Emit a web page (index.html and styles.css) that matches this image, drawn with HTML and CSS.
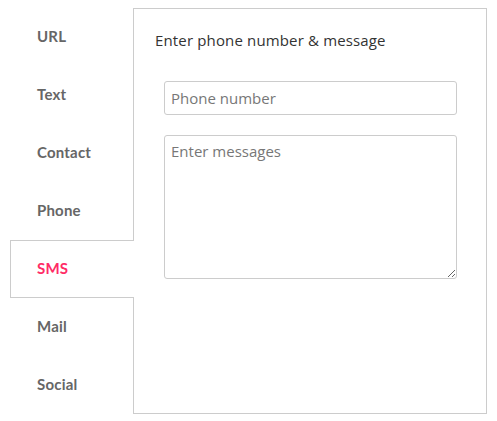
FILE: index.html
```html
<!DOCTYPE html>
<html>
<head>
<meta charset="utf-8">
<link rel="stylesheet" href="styles.css">
</head>
<body>
<div class="wrap">
  <ul class="tabs">
    <li class="tab">URL</li>
    <li class="tab">Text</li>
    <li class="tab">Contact</li>
    <li class="tab">Phone</li>
    <li class="tab active">SMS</li>
    <li class="tab">Mail</li>
    <li class="tab">Social</li>
  </ul>
  <div class="panel">
    <h2 class="title">Enter phone number &amp; message</h2>
    <input class="field" type="text" placeholder="Phone number">
    <textarea class="area" placeholder="Enter messages"></textarea>
  </div>
</div>
</body>
</html>
```
FILE: styles.css
```css
html, body { background: #fff; }
body { margin: 8px 10px; font-family: "Open Sans", sans-serif; }
.wrap { display: flex; height: 406px; }
.tabs { list-style: none; margin: 0; padding: 0; width: 124px; flex: none; }
.tab {
  box-sizing: border-box;
  height: 58px;
  display: flex;
  align-items: center;
  padding-left: 27px;
  padding-bottom: 2px;
  font-family: "Lato", sans-serif;
  font-weight: 700;
  font-size: 15px;
  letter-spacing: 0.2px;
  color: #666;
  border-right: 1px solid #ccc;
}
.tab.active {
  color: #ff2b66;
  border: 1px solid #ccc;
  border-right: none;
  padding-left: 26px;
  background: #fff;
}
.panel {
  flex: 1;
  box-sizing: border-box;
  border: 1px solid #ccc;
  border-left: none;
  padding: 21px 29px 0 30px;
  display: flex;
  flex-direction: column;
}
.title {
  margin: 0 0 0 -9px;
  font-size: 15px;
  font-weight: 400;
  letter-spacing: 0.15px;
  line-height: 20px;
  color: #333;
}
.field, .area {
  box-sizing: border-box;
  width: 100%;
  border: 1px solid #ccc;
  border-radius: 3px;
  font-family: "Open Sans", sans-serif;
  font-size: 15px;
  color: #333;
  padding: 0 6px;
  margin: 0;
  outline: none;
}
.field { height: 34px; margin-top: 31px; }
.area { height: 144px; margin-top: 20px; padding-top: 5px; resize: both; }
.field::placeholder, .area::placeholder { color: #777; }
```
